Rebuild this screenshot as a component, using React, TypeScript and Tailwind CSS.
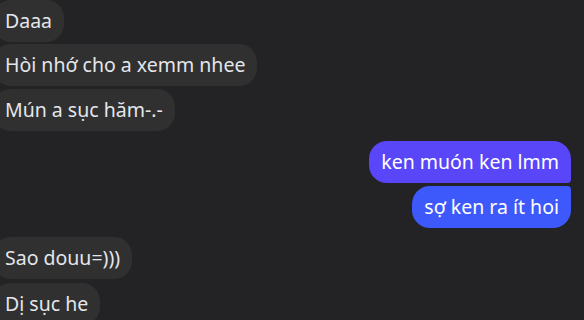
import React from "react";

const font = { fontFamily: '"Noto Sans", "Open Sans", sans-serif' };

function Left({ text, cls }: { text: string; cls: string }) {
  return (
    <div className={`flex ${cls}`}>
      <div className="ml-[-7px] h-[42px] flex items-center rounded-[18px] bg-[#303030] pl-3 pr-3 text-[19.5px] text-[#e4e6eb] leading-[24px] whitespace-nowrap">
        {text}
      </div>
    </div>
  );
}

export default function App() {
  return (
    <div className="w-[584px] h-[320px] overflow-hidden bg-[#232325]" style={font}>
      <div className="flex flex-col">
        <Left text="Daaa" cls="" />
        <Left text="Hòi nhớ cho a xemm nhee" cls="mt-[2px]" />
        <Left text="Mún a sục hăm-.-" cls="mt-[3px]" />
        <div className="flex justify-end pr-[13px] mt-[10px]">
          <div className="h-[42px] flex items-center rounded-[18px] rounded-br-[4px] bg-[#5846f8] px-3 text-[19.5px] text-white leading-[24px] whitespace-nowrap">
            ken muón ken lmm
          </div>
        </div>
        <div className="flex justify-end pr-[13px] mt-[3px]">
          <div className="h-[42px] flex items-center rounded-[18px] rounded-tr-[4px] bg-[#3e59fb] px-3 text-[19.5px] text-white leading-[24px] whitespace-nowrap">
            sợ ken ra ít hoi
          </div>
        </div>
        <Left text="Sao douu=)))" cls="mt-[9px]" />
        <Left text="Dị sục he" cls="mt-[4px]" />
      </div>
    </div>
  );
}
